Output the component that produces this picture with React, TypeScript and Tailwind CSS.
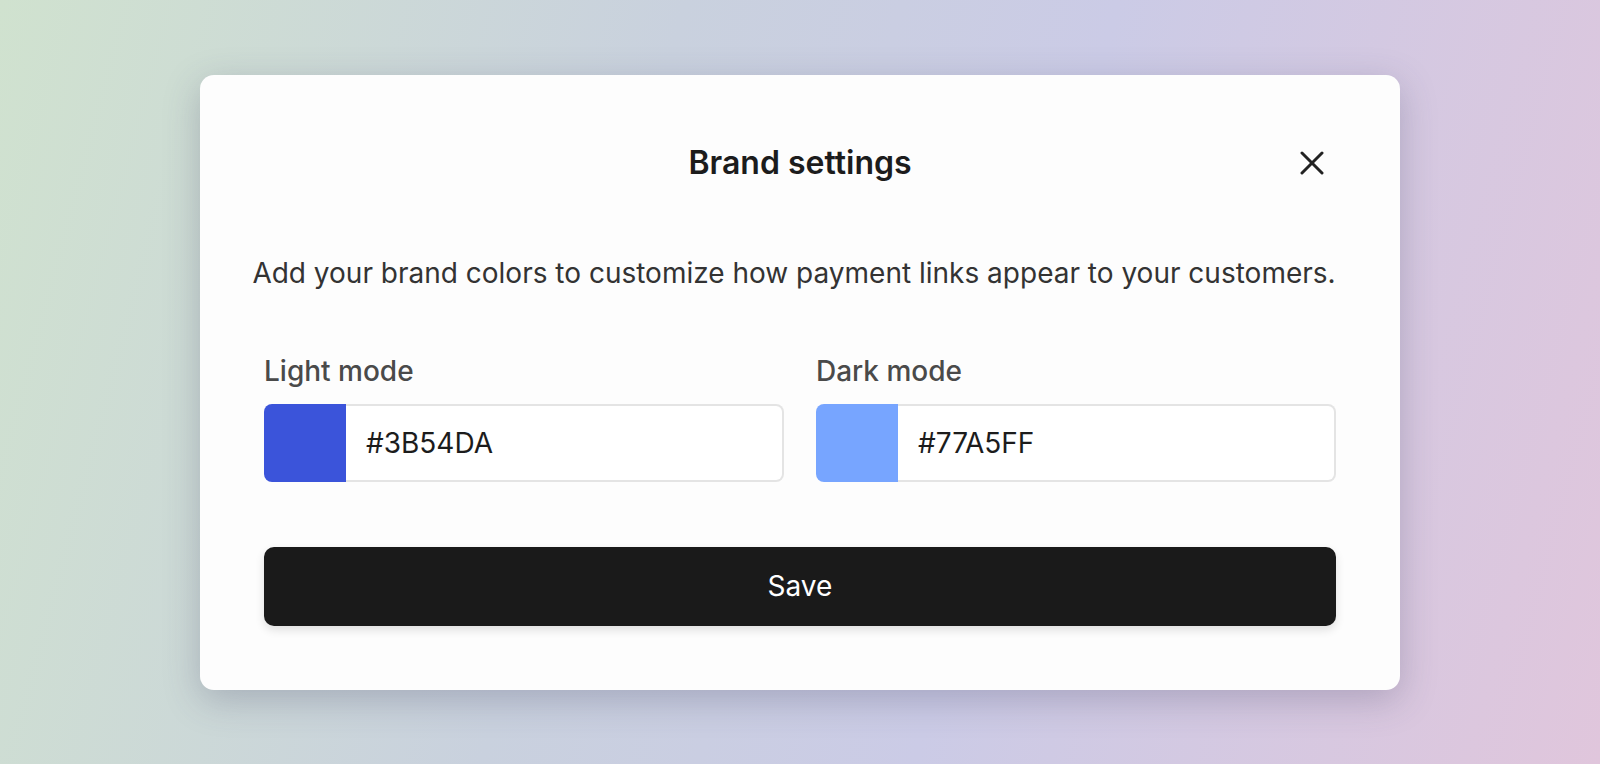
import React from 'react';

const ColorField: React.FC<{ label: string; color: string; swatch: string }> = ({ label, color, swatch }) => (
  <div className="flex flex-col">
    <label className="text-[28px] leading-8 font-medium text-[#4a4a4a]">{label}</label>
    <div className="mt-[17px] flex h-[78px]">
      <div className={`w-[82px] rounded-l-[8px] ${swatch}`} />
      <div className="flex flex-1 items-center rounded-r-[8px] border-2 border-l-0 border-[#e4e4e4] bg-white pl-[20px] text-[28px] text-[#1c1c1c]">
        {color}
      </div>
    </div>
  </div>
);

const App: React.FC = () => {
  return (
    <div className="flex h-screen w-full items-center justify-center bg-[linear-gradient(105deg,#d0e2cf_0%,#c9d1de_38%,#cbcbe6_62%,#e0c6dc_100%)] font-['Inter',sans-serif]">
      <div className="w-[1200px] rounded-[14px] bg-[#fdfdfd] px-16 pb-16 pt-[68px] shadow-[0_10px_36px_rgba(70,70,100,0.28)]">
        <div className="relative flex h-10 items-center justify-center">
          <h2 className="text-[32px] font-semibold text-[#1c1c1c]">Brand settings</h2>
          <button className="absolute right-0 top-1/2 flex h-12 w-12 -translate-y-1/2 items-center justify-center text-[#222]">
            <svg width="24" height="24" viewBox="0 0 24 24" fill="none" stroke="currentColor" strokeWidth="3" strokeLinecap="round">
              <path d="M2 2 22 22" />
              <path d="M22 2 2 22" />
            </svg>
          </button>
        </div>

        <div className="mt-[72px] flex justify-center pr-3">
          <p className="whitespace-nowrap text-[28px] leading-9 text-[#333]">
            Add your brand colors to customize how payment links appear to your customers.
          </p>
        </div>

        <div className="mt-16 grid grid-cols-2 gap-8">
          <ColorField label="Light mode" color="#3B54DA" swatch="bg-[#3B54DA]" />
          <ColorField label="Dark mode" color="#77A5FF" swatch="bg-[#77A5FF]" />
        </div>

        <button className="mt-[65px] flex h-[79px] w-full items-center justify-center rounded-[10px] bg-[#1a1a1a] text-[28px] font-normal text-white shadow-[0_4px_10px_rgba(0,0,0,0.12)]">
          Save
        </button>
      </div>
    </div>
  );
};

export default App;
